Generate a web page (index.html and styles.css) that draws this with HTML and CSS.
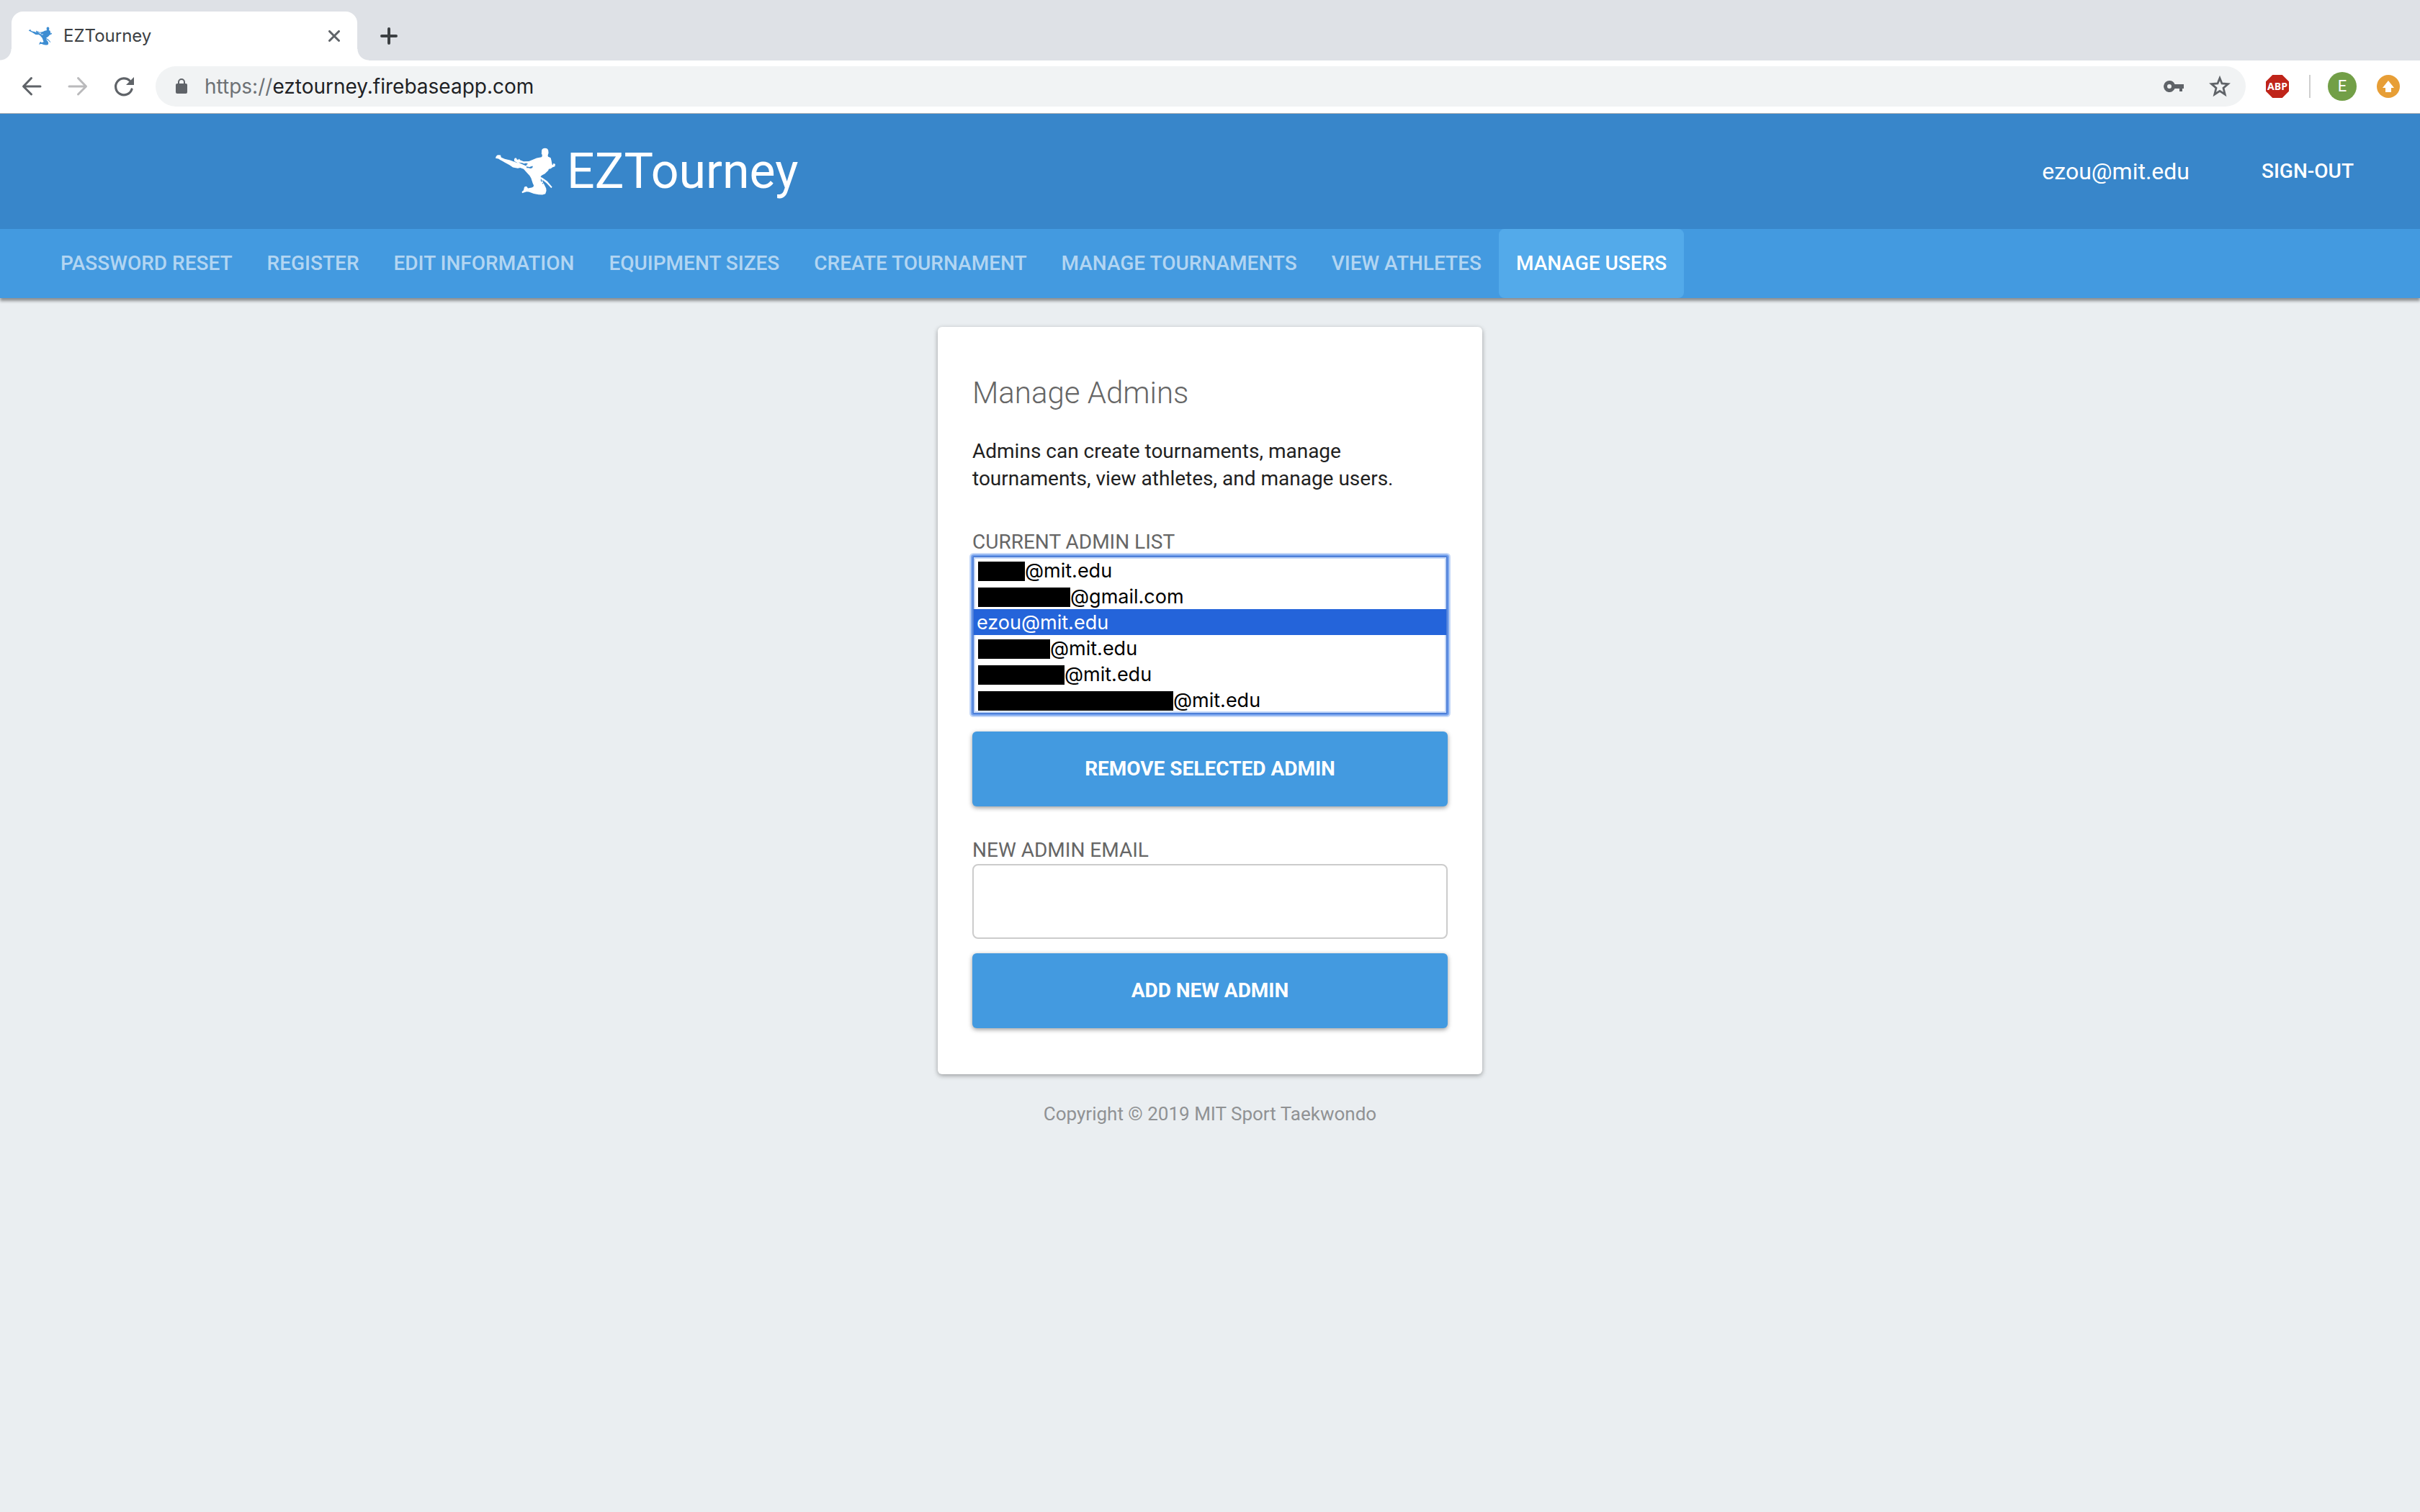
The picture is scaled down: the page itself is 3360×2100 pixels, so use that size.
FILE: index.html
```html
<!DOCTYPE html>
<html lang="en">
<head>
<meta charset="utf-8">
<title>EZTourney</title>
<link rel="stylesheet" href="styles.css">
</head>
<body>
<svg class="sprite" aria-hidden="true">
  <symbol id="kicker" viewBox="12 10 247 196">
    <path fill-rule="evenodd" d="M12 54L14 47L18 42L23 40L33 41L35 50L50 57L72 62L92 69L104 74L97 69L90 66L89 58L92 53L98 53L101 60L106 60L110 56L113 61L128 67L150 66L168 59L182 53L202 49L205 45L204 38L202 35L203 20Q206 12 216 12Q228 12 230 22L231 32L228 42L229 47L240 52L243 64L246 80L249 83L250 76L256 76L259 80L257 88L248 91L240 97L232 98L230 104L216 118L202 125L198 131L206 135L226 149L246 173L242 177L238 173L224 158L206 143L209 160L206 160L203 143L199 138L199 148L211 158L221 178L222 188L218 201L206 205L190 204L170 200L150 193L140 192L122 198L121 192L128 186L131 173L138 170L142 172L146 178L162 175L168 172L170 166L166 158L159 136L153 126L144 116L134 105L128 98L114 93L104 95L84 92L70 82L48 70L42 66L32 61L24 56ZM141 88L152 90L165 86L166 88L164 94L156 96L148 94L140 94ZM106 71L122 73L130 76L138 74L146 77L138 83L142 87L128 81Z"/>
  </symbol>
</svg>

<div class="tab-strip">
  <div class="tab">
    <svg class="tab-icon"><use href="#kicker"/></svg>
    <span class="tab-title">EZTourney</span>
    <button class="icon-button close" aria-label="Close tab">
      <svg width="16" height="16" viewBox="0 0 16 16"><path d="M1.500 1.500L14.500 14.500M14.500 1.500L1.500 14.500" stroke="currentColor" stroke-width="3" stroke-linecap="round"/></svg>
    </button>
  </div>
  <button class="icon-button new-tab" aria-label="New tab">
    <svg width="24" height="24" viewBox="0 0 24 24"><path d="M12 2V22M2 12H22" stroke="currentColor" stroke-width="4" stroke-linecap="round"/></svg>
  </button>
</div>

<div class="toolbar">
  <div class="history">
    <button class="icon-button" aria-label="Back">
      <svg width="32" height="32" viewBox="0 0 32 32"><path d="M28 16H5M15.500 4.500L4.500 16L15.500 27" fill="none" stroke="currentColor" stroke-width="3" stroke-linecap="round" stroke-linejoin="round"/></svg>
    </button>
    <button class="icon-button" aria-label="Forward" disabled>
      <svg width="32" height="32" viewBox="0 0 32 32"><path d="M4 16H27M16.500 4.500L27.500 16L16.500 27" fill="none" stroke="currentColor" stroke-width="3" stroke-linecap="round" stroke-linejoin="round"/></svg>
    </button>
    <button class="icon-button" aria-label="Reload">
      <svg width="32" height="32" viewBox="0 0 32 32"><path d="M27 20A11.500 11.500 0 1 1 24.500 8.500" fill="none" stroke="currentColor" stroke-width="3.200" stroke-linecap="round"/><path d="M30 3V14H19Z" fill="currentColor"/></svg>
    </button>
  </div>
  <div class="omnibox">
    <svg class="lock" width="16" height="22" viewBox="0 0 16 22"><rect y="7" width="16" height="14" rx="2" fill="currentColor"/><path d="M4 8V5A4 4 0 0 1 12 5V8" fill="none" stroke="currentColor" stroke-width="2"/></svg>
    <div class="url" role="textbox" aria-label="Address"><span class="scheme">https://</span>eztourney.firebaseapp.com</div>
    <button class="icon-button key" aria-label="Saved passwords">
      <svg width="28" height="16" viewBox="0 0 28 16"><path fill-rule="evenodd" d="M8 0A8 8 0 1 0 15.500 11H22V15H26V11H28V5H15.500A8 8 0 0 0 8 0ZM8 5A3 3 0 1 1 8 11A3 3 0 1 1 8 5Z" fill="currentColor"/></svg>
    </button>
    <button class="icon-button" aria-label="Bookmark this page">
      <svg width="32" height="32" viewBox="0 0 32 32"><path d="M16 4.500L19 12L27.500 12.600L21 18.300L23.200 27L16 22.300L8.800 27L11 18.300L4.500 12.600L13 12Z" fill="none" stroke="currentColor" stroke-width="2.800"/></svg>
    </button>
  </div>
  <button class="abp" aria-label="Adblock Plus">ABP</button>
  <span class="divider"></span>
  <button class="avatar" aria-label="Profile">E</button>
  <button class="icon-button" aria-label="Update">
    <svg width="32" height="32" viewBox="0 0 32 32"><circle cx="16" cy="16" r="16" fill="#e79e36"/><path d="M16 8L24 18H20V24H12V18H8Z" fill="#fff"/></svg>
  </button>
</div>

<header class="site-header">
  <a class="brand" href="#"><svg class="brand-icon"><use href="#kicker"/></svg>EZTourney</a>
  <div class="account">
    <span class="account-email">ezou@mit.edu</span>
    <button class="sign-out">SIGN-OUT</button>
  </div>
</header>

<nav class="site-nav">
  <a href="#">PASSWORD RESET</a>
  <a href="#">REGISTER</a>
  <a href="#">EDIT INFORMATION</a>
  <a href="#">EQUIPMENT SIZES</a>
  <a href="#">CREATE TOURNAMENT</a>
  <a href="#">MANAGE TOURNAMENTS</a>
  <a href="#">VIEW ATHLETES</a>
  <a href="#" class="active" aria-current="page">MANAGE USERS</a>
</nav>

<main class="card">
  <h1>Manage Admins</h1>
  <p class="intro">Admins can create tournaments, manage tournaments, view athletes, and manage users.</p>
  <form class="group">
    <label for="admins">CURRENT ADMIN LIST</label>
    <select id="admins" size="6" autofocus>
      <option class="redacted" style="--name: 65px">@mit.edu</option>
      <option class="redacted" style="--name: 128px">@gmail.com</option>
      <option class="current" selected>ezou@mit.edu</option>
      <option class="redacted" style="--name: 100px">@mit.edu</option>
      <option class="redacted" style="--name: 120px">@mit.edu</option>
      <option class="redacted" style="--name: 271px">@mit.edu</option>
    </select>
    <button class="primary" type="button">REMOVE SELECTED ADMIN</button>
  </form>
  <form class="group">
    <label for="email">NEW ADMIN EMAIL</label>
    <input id="email" type="email">
    <button class="primary" type="button">ADD NEW ADMIN</button>
  </form>
</main>

<footer class="site-footer">Copyright © 2019 MIT Sport Taekwondo</footer>
</body>
</html>
```
FILE: styles.css
```css
* {
  box-sizing: border-box;
}

body {
  margin: 0;
  background: #eaeef1;
  color: #212121;
  font: 28px/38px Roboto, sans-serif;
}

button {
  border: 0;
  padding: 0;
  background: none;
  font: inherit;
  cursor: pointer;
}

a {
  color: inherit;
  text-decoration: none;
}

svg {
  display: block;
}

.sprite {
  display: none;
}

/* Browser window */
.tab-strip {
  display: flex;
  height: 84px;
  padding: 16px 16px 0;
  background: #dee1e6;
}

.tab {
  position: relative;
  display: flex;
  align-items: center;
  width: 480px;
  padding: 0 24px;
  border-radius: 16px 16px 0 0;
  background: #fff;
  color: #3c4043;
  font: 24px/32px Inter, sans-serif;
}

.tab::before,
.tab::after {
  content: "";
  position: absolute;
  bottom: 0;
  width: 16px;
  height: 16px;
}

.tab::before {
  right: 100%;
  background: radial-gradient(circle at 0 0, transparent 15px, #fff 16px);
}

.tab::after {
  left: 100%;
  background: radial-gradient(circle at 100% 0, transparent 15px, #fff 16px);
}

.tab-icon {
  width: 32px;
  height: 26px;
  fill: #3d8dd2;
}

.tab-title {
  flex: 1;
  padding-left: 16px;
}

.icon-button {
  color: #5f6368;
}

.icon-button:disabled {
  color: #bababc;
}

.new-tab {
  margin-left: 32px;
  color: #3c4043;
}

.toolbar {
  display: flex;
  align-items: center;
  gap: 28px;
  padding: 8px 28px 9px;
  border-bottom: 1px solid #b6b4b6;
  background: #fff;
}

.history {
  display: flex;
  gap: 32px;
}

.omnibox {
  display: flex;
  flex: 1;
  align-items: center;
  height: 56px;
  padding: 0 20px 0 28px;
  border-radius: 28px;
  background: #f1f3f4;
}

.lock {
  color: #5f6368;
}

.url {
  flex: 1;
  padding-left: 24px;
  color: #202124;
  font: 28px/36px Inter, sans-serif;
}

.scheme {
  color: #6d7175;
}

.key {
  margin-right: 34px;
}

.abp {
  width: 32px;
  height: 32px;
  background: #bf2419;
  clip-path: polygon(29% 0, 71% 0, 100% 29%, 100% 71%, 71% 100%, 29% 100%, 0 71%, 0 29%);
  color: #fff;
  font: 700 14px/32px "Open Sans", sans-serif;
}

.divider {
  width: 2px;
  height: 32px;
  background: #cfcfcf;
}

.avatar {
  width: 40px;
  height: 40px;
  margin-left: -4px;
  border-radius: 50%;
  background: #729f47;
  color: #fff;
  font-size: 22px;
}

/* Site header */
.site-header {
  display: flex;
  align-items: center;
  justify-content: space-between;
  height: 160px;
  padding: 0 92px 0 20%;
  background: #3886ca;
  color: #fff;
}

.brand {
  display: flex;
  align-items: center;
  gap: 16px;
  padding-left: 16px;
  font-size: 68px;
  line-height: 80px;
}

.brand-icon {
  width: 83px;
  height: 66px;
  fill: #fff;
}

.account {
  display: flex;
  align-items: center;
  gap: 100px;
}

.account-email {
  font-size: 32px;
}

.sign-out {
  color: #fff;
  font-weight: 500;
}

.site-nav {
  display: flex;
  padding: 0 60px;
  background: #439ae0;
  box-shadow: 0 4px 4px rgba(0, 0, 0, 0.4);
  color: rgba(255, 255, 255, 0.6);
  font-weight: 500;
}

.site-nav a {
  padding: 0 24px;
  line-height: 96px;
}

.site-nav .active {
  border-radius: 8px;
  background: #53aaea;
  color: #fff;
}

/* Card */
.card {
  width: 756px;
  max-width: 100%;
  margin: 40px auto 0;
  padding: 64px 48px;
  border-radius: 6px;
  background: #fff;
  box-shadow: 0 2px 6px rgba(0, 0, 0, 0.35);
}

h1 {
  margin: 0;
  color: #666;
  font-size: 42px;
  font-weight: 300;
  line-height: 56px;
}

.intro {
  margin: 34px 0 50px;
}

.group {
  display: flex;
  flex-direction: column;
}

.group + .group {
  margin-top: 42px;
}

label {
  color: #666;
}

select {
  width: 100%;
  height: 220px;
  margin-bottom: 24px;
  padding: 0;
  overflow: hidden;
  border: 2px solid #4d7fd8;
  border-radius: 2px;
  outline: 0;
  background: #fff;
  box-shadow: 0 0 0 2px #7aa5ee, 0 0 0 4px #c5d8f7, inset 0 0 0 2px #c5d8f7;
  color: #000;
  font: 27px/36px Inter, sans-serif;
}

option {
  height: 36px;
  min-height: 36px;
  padding: 2px 4px 0;
  line-height: 34px;
}

.redacted {
  padding-left: calc(var(--name) + 6px);
  background: linear-gradient(#000, #000) 6px 6px / var(--name) 27px no-repeat;
}

.current {
  background: linear-gradient(#2464da, #2464da);
  color: #fff;
  -webkit-text-fill-color: #fff;
}

input {
  width: 100%;
  height: 104px;
  margin-bottom: 20px;
  padding: 0 24px;
  border: 2px solid #ccc;
  border-radius: 8px;
  background: #fff;
  font: inherit;
}

.primary {
  height: 104px;
  border-radius: 6px;
  background: #439ae0;
  box-shadow: 0 2px 6px rgba(0, 0, 0, 0.4);
  color: #fff;
  font-weight: 700;
}

.site-footer {
  padding: 36px 24px;
  color: #909294;
  font-size: 26px;
  text-align: center;
}
```
